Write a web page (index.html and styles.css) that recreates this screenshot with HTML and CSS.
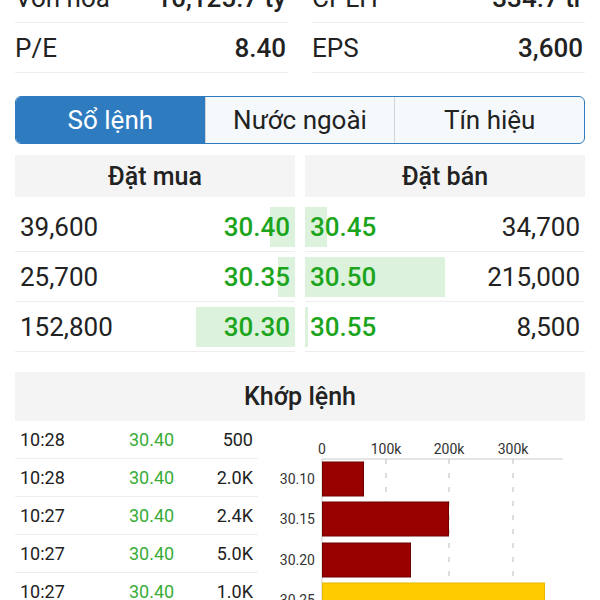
FILE: index.html
```html
<!DOCTYPE html>
<html lang="vi">
  <head>
    <meta charset="UTF-8" />
    <meta name="viewport" content="width=device-width, initial-scale=1.0" />
    <title>Sổ lệnh</title>
    <link rel="stylesheet" href="styles.css">
  </head>
  <body>
    <div class="screen">
      <div class="stats">
        <div class="stat"><span>Vốn hóa</span><span class="stat-value">10,125.7 tỷ</span></div>
        <div class="stat"><span>CPLH</span><span class="stat-value">334.7 tr</span></div>
        <div class="stat"><span>P/E</span><span class="stat-value">8.40</span></div>
        <div class="stat"><span>EPS</span><span class="stat-value">3,600</span></div>
      </div>

      <div class="tabs">
        <div class="tab active">Sổ lệnh</div>
        <div class="tab">Nước ngoài</div>
        <div class="tab">Tín hiệu</div>
      </div>

      <div class="book">
        <div class="book-side buy">
          <div class="book-head">Đặt mua</div>
          <div class="book-row"><span class="bar" style="width: 25px"></span><span class="vol">39,600</span><span class="price">30.40</span></div>
          <div class="book-row"><span class="bar" style="width: 17px"></span><span class="vol">25,700</span><span class="price">30.35</span></div>
          <div class="book-row"><span class="bar" style="width: 99px"></span><span class="vol">152,800</span><span class="price">30.30</span></div>
        </div>
        <div class="book-side sell">
          <div class="book-head">Đặt bán</div>
          <div class="book-row"><span class="bar" style="width: 22px"></span><span class="price">30.45</span><span class="vol">34,700</span></div>
          <div class="book-row"><span class="bar" style="width: 140px"></span><span class="price">30.50</span><span class="vol">215,000</span></div>
          <div class="book-row"><span class="bar" style="width: 3px"></span><span class="price">30.55</span><span class="vol">8,500</span></div>
        </div>
      </div>

      <div class="match">
        <div class="match-head">Khớp lệnh</div>
        <div class="match-body">
          <div class="trades">
            <div class="trade"><span>10:28</span><span class="trade-price">30.40</span><span class="trade-vol">500</span></div>
            <div class="trade"><span>10:28</span><span class="trade-price">30.40</span><span class="trade-vol">2.0K</span></div>
            <div class="trade"><span>10:27</span><span class="trade-price">30.40</span><span class="trade-vol">2.4K</span></div>
            <div class="trade"><span>10:27</span><span class="trade-price">30.40</span><span class="trade-vol">5.0K</span></div>
            <div class="trade"><span>10:27</span><span class="trade-price">30.40</span><span class="trade-vol">1.0K</span></div>
          </div>

          <!-- volume by price, 100k = 63.7px -->
          <svg class="chart" width="315" height="180" viewBox="0 0 315 180">
            <line class="grid-line" x1="116" y1="38" x2="116" y2="180" />
            <line class="grid-line" x1="179" y1="38" x2="179" y2="180" />
            <line class="grid-line" x1="243" y1="38" x2="243" y2="180" />
            <line class="axis-line" x1="52" y1="38" x2="293" y2="38" />
            <line class="axis-line" x1="52" y1="38" x2="52" y2="180" />

            <text class="axis-label" x="52" y="33" text-anchor="middle">0</text>
            <text class="axis-label" x="116" y="33" text-anchor="middle">100k</text>
            <text class="axis-label" x="179" y="33" text-anchor="middle">200k</text>
            <text class="axis-label" x="243" y="33" text-anchor="middle">300k</text>

            <rect class="vol-bar" x="52.5" y="41" width="41" height="34" />
            <rect class="vol-bar" x="52.5" y="81" width="126" height="34" />
            <rect class="vol-bar" x="52.5" y="122" width="88" height="34" />
            <rect class="vol-bar current" x="52.5" y="162" width="222" height="34" />

            <text class="axis-label" x="45" y="63" text-anchor="end">30.10</text>
            <text class="axis-label" x="45" y="103" text-anchor="end">30.15</text>
            <text class="axis-label" x="45" y="144" text-anchor="end">30.20</text>
            <text class="axis-label" x="45" y="184" text-anchor="end">30.25</text>
          </svg>
        </div>
      </div>
    </div>
  </body>
</html>
```

FILE: styles.css
```css
* {
  padding: 0;
  margin: 0;
  box-sizing: border-box;
}

html,
body {
  overflow: hidden;
}

body {
  font-family: Roboto, "Liberation Sans", sans-serif;
  color: #222;
  background-color: #fff;
}

.screen {
  width: 600px;
  padding: 0 15px;
  margin-top: -27px;
}

/* top stats */

.stats {
  display: grid;
  grid-template-columns: 1fr 1fr;
  column-gap: 24px;
}

.stat {
  display: flex;
  justify-content: space-between;
  align-items: center;
  height: 50px;
  font-size: 26px;
  border-bottom: 1px solid #eee;
}

.stat-value {
  font-weight: 500;
  padding-right: 2px;
}

/* tabs */

.tabs {
  display: flex;
  height: 48px;
  margin-top: 23px;
  border: 1px solid #2e7cbf;
  border-radius: 6px;
  overflow: hidden;
  background-color: #f6f9fc;
}

.tab {
  flex: 1;
  display: flex;
  align-items: center;
  justify-content: center;
  font-size: 26px;
  color: #222;
}

.tab + .tab {
  border-left: 1px solid #cdd5dc;
}

.tab.active {
  background-color: #2e7cbf;
  color: #fff;
}

/* order book */

.book {
  display: grid;
  grid-template-columns: 1fr 1fr;
  column-gap: 10px;
  margin-top: 11px;
}

.book-head {
  height: 42px;
  margin-bottom: 5px;
  background-color: #f4f4f4;
  font-size: 25px;
  font-weight: 500;
  display: flex;
  align-items: center;
  justify-content: center;
}

.book-row {
  position: relative;
  display: flex;
  justify-content: space-between;
  align-items: center;
  height: 50px;
  padding: 5px 5px 4px;
  font-size: 26px;
  border-bottom: 1px solid #eee;
}

.book-row span {
  position: relative;
}

.book-row .bar {
  position: absolute;
  top: 5px;
  height: 40px;
  background-color: #dcf2dc;
}

.buy .bar {
  right: 0;
}

.sell .bar {
  left: 0;
}

.price {
  color: #1ca51c;
  font-weight: 500;
}

/* matched orders */

.match {
  margin-top: 20px;
}

.match-head {
  height: 49px;
  background-color: #f4f4f4;
  font-size: 25px;
  font-weight: 500;
  display: flex;
  align-items: center;
  justify-content: center;
}

.match-body {
  display: flex;
  gap: 12px;
}

.trades {
  width: 243px;
}

.trade {
  display: grid;
  grid-template-columns: 109px 1fr auto;
  align-items: center;
  height: 38px;
  padding: 0 5px;
  font-size: 18px;
  border-bottom: 1px solid #eee;
}

.trade-price {
  color: #38ad38;
}

.chart {
  display: block;
  flex-shrink: 0;
}

.axis-label {
  font-family: Roboto, "Liberation Sans", sans-serif;
  font-size: 14px;
  fill: #333;
}

.axis-line {
  stroke: #ccc;
  stroke-width: 1;
}

.grid-line {
  stroke: #bbb;
  stroke-width: 1;
  stroke-dasharray: 5 9;
}

.vol-bar {
  fill: #990000;
  stroke: #6e0000;
  stroke-width: 1;
}

.vol-bar.current {
  fill: #ffcc00;
  stroke: #e6b800;
}
```
